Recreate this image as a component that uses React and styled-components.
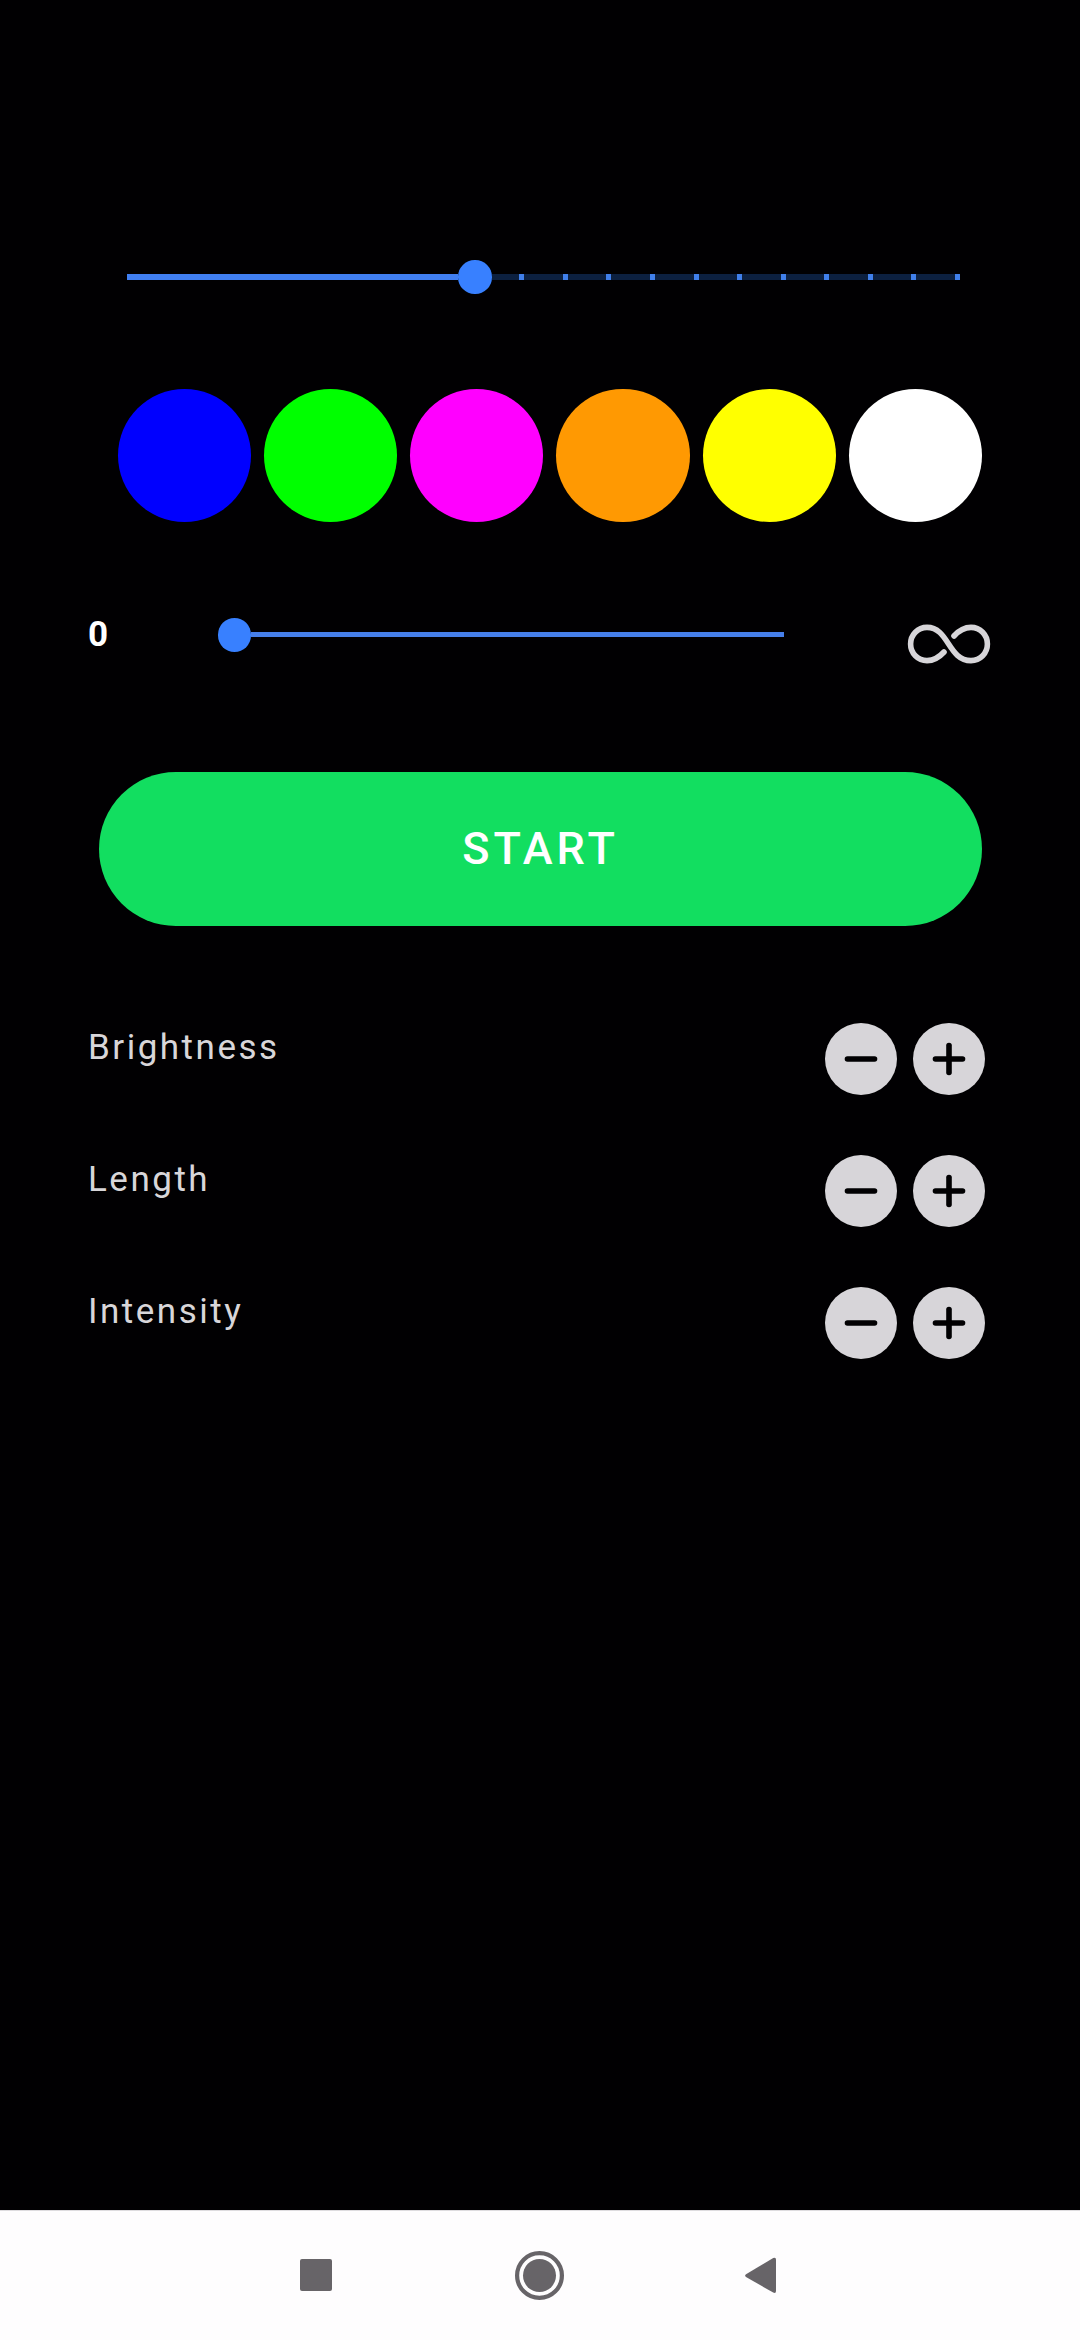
import React from 'react';
import styled, { createGlobalStyle } from 'styled-components';

const GlobalStyle = createGlobalStyle`
* {
  box-sizing: border-box;
}

body {
  margin: 0;
  background-color: #010002;
  font-family: Roboto, "Liberation Sans", sans-serif;
}
`;

const Screen = styled.div`
display: flex;
flex-direction: column;
width: 1080px;
height: 2340px;
background-color: #010002;
overflow: hidden;
`;

const Main = styled.main`
flex: 1;
display: flex;
flex-direction: column;
padding-top: 260px;
`;

const SpeedSlider = styled.div`
display: flex;
align-items: center;
height: 34px;
margin: 0 120px 0 127px;
`;

const Filled = styled.div`
flex: none;
width: ${(props) => props.$width}px;
height: ${(props) => props.$height}px;
background-color: ${(props) => props.$color || '#407ff2'};
`;

const Thumb = styled.div`
flex: none;
width: 33.4px;
height: 33.4px;
border-radius: 50%;
background-color: #3880ff;
`;

const Ticks = styled.div`
flex: 1;
display: flex;
justify-content: space-between;
height: 6px;
padding-left: 27.6px;
background-color: #0c2040;
`;

const Tick = styled.span`
width: 5px;
height: 6px;
background-color: #407fea;
`;

const Swatches = styled.div`
display: flex;
gap: 12.9px;
margin: 94.7px 0 0 117.8px;
`;

const Swatch = styled.button`
width: 133.3px;
height: 133.3px;
padding: 0;
border: none;
border-radius: 50%;
background-color: ${(props) => props.$color};
`;

const TimerRow = styled.div`
display: flex;
align-items: center;
height: 34px;
margin: 96px 89px 0 88px;
`;

const Count = styled.span`
width: 130px;
font-size: 35px;
font-weight: 700;
line-height: 34px;
color: #fff;
`;

const InfinityIcon = styled.svg`
flex: none;
width: 84px;
height: 42px;
margin: 18px 0 0 auto;
`;

const StartButton = styled.button`
height: 154px;
margin: 120px 98px 0 99px;
padding: 0;
border: none;
border-radius: 77px;
background-color: #12de60;
color: #fff;
font-family: inherit;
font-size: 45px;
font-weight: 500;
letter-spacing: 4px;
`;

const Settings = styled.div`
display: flex;
flex-direction: column;
gap: 60px;
margin: 97px 95px 0 88px;
`;

const Setting = styled.div`
display: flex;
justify-content: space-between;
height: 72px;
`;

const Label = styled.span`
padding-top: 4px;
font-size: 35px;
line-height: 41px;
letter-spacing: 2.5px;
color: #d8d6d9;
`;

const Buttons = styled.div`
display: flex;
gap: 16px;
`;

const RoundButton = styled.button`
display: flex;
width: 72px;
height: 72px;
padding: 0;
border: none;
border-radius: 50%;
background-color: #d7d5d9;
`;

const NavBar = styled.nav`
display: flex;
align-items: center;
height: 130px;
padding: 0 0 1px 300px;
border-top: 1px solid #dedcdf;
background-color: #fefdfe;
`;

const NavIcon = styled.svg`
flex: none;
width: ${(props) => props.$width}px;
height: 50px;
margin-right: ${(props) => props.$gap || 0}px;
fill: #676468;
`;

const colors = ['#0000ff', '#00ff00', '#ff00ff', '#ff9902', '#ffff00', '#ffffff'];
const settings = ['Brightness', 'Length', 'Intensity'];

const StepButton = ({ plus, label }) => (
  <RoundButton aria-label={label}>
    <svg width="72" height="72" stroke="#010002" strokeWidth="5.6" strokeLinecap="round">
      <path d="M22.5 36H49.5" />
      {plus && <path d="M36 22.5V49.5" />}
    </svg>
  </RoundButton>
);

const App = () => {
  return (
    <>
      <GlobalStyle />
      <Screen>
        <Main>
          <SpeedSlider>
            <Filled $width={331.3} $height={6} />
            <Thumb />
            <Ticks>
              {Array.from({ length: 11 }, (_, i) => (
                <Tick key={i} />
              ))}
            </Ticks>
          </SpeedSlider>
          <Swatches>
            {colors.map((color) => (
              <Swatch key={color} $color={color} aria-label={color} />
            ))}
          </Swatches>
          <TimerRow>
            <Count>0</Count>
            <Thumb />
            <Filled $width={532.6} $height={5} $color="#467fea" />
            <InfinityIcon viewBox="0 0 84 42" fill="none" stroke="#d7d5d9" strokeWidth="5.6" strokeLinecap="round">
              <path d="M37 29C32 34.5 27 37.6 20 37.6C10.8 37.6 3.6 30.2 3.6 21C3.6 11.8 10.8 4.4 20 4.4C42 4.4 41 37.6 64 37.6C73.2 37.6 80.4 30.2 80.4 21C80.4 11.8 73.2 4.4 64 4.4C57 4.4 52 7.5 47 13" />
            </InfinityIcon>
          </TimerRow>
          <StartButton>START</StartButton>
          <Settings>
            {settings.map((name) => (
              <Setting key={name}>
                <Label>{name}</Label>
                <Buttons>
                  <StepButton label={`Decrease ${name}`} />
                  <StepButton label={`Increase ${name}`} plus />
                </Buttons>
              </Setting>
            ))}
          </Settings>
        </Main>
        <NavBar>
          <NavIcon $width={32} $gap={183}>
            <rect y="9" width="32" height="32" rx="2" />
          </NavIcon>
          <NavIcon $width={50} $gap={180}>
            <circle cx="24.5" cy="25.5" r="22.4" fill="none" stroke="#676468" strokeWidth="4.2" />
            <circle cx="24.5" cy="25.5" r="16.5" />
          </NavIcon>
          <NavIcon $width={31}>
            <path d="M1 24.2L28.2 8Q31 7 31 9.5V41Q31 43.8 28.2 42.6L1 27Q-0.8 25.6 1 24.2Z" />
          </NavIcon>
        </NavBar>
      </Screen>
    </>
  );
};

export default App;
